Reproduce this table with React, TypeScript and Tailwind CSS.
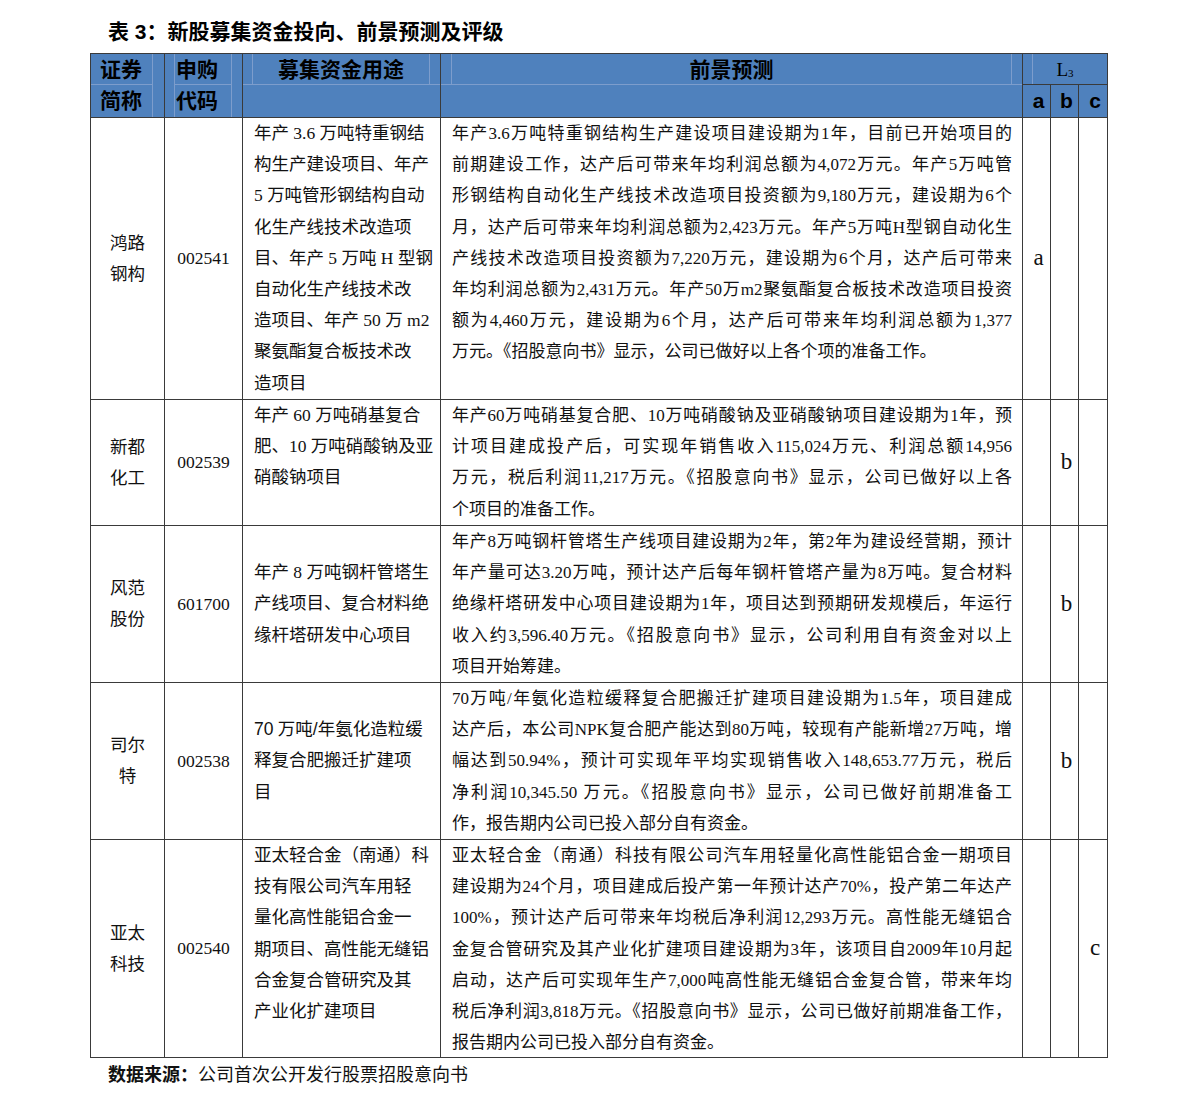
import React from 'react';

type Row = {
  name: [string, string];
  code: string;
  use: React.ReactNode[];
  useCenter: boolean;
  forecast: string[];
  rating: 'a' | 'b' | 'c';
};

const sans = "font-['Liberation_Sans','Noto_Sans_CJK_SC',sans-serif]";

const rows: Row[] = [
  {
    name: ['鸿路', '钢构'],
    code: '002541',
    use: [
      '年产 3.6 万吨特重钢结',
      '构生产建设项目、年产',
      '5 万吨管形钢结构自动',
      '化生产线技术改造项',
      '目、年产 5 万吨 H 型钢',
      '自动化生产线技术改',
      '造项目、年产 50 万 m2',
      '聚氨酯复合板技术改',
      '造项目',
    ],
    useCenter: false,
    forecast: [
      '年产3.6万吨特重钢结构生产建设项目建设期为1年，目前已开始项目的',
      '前期建设工作，达产后可带来年均利润总额为4,072万元。年产5万吨管',
      '形钢结构自动化生产线技术改造项目投资额为9,180万元，建设期为6个',
      '月，达产后可带来年均利润总额为2,423万元。年产5万吨H型钢自动化生',
      '产线技术改造项目投资额为7,220万元，建设期为6个月，达产后可带来',
      '年均利润总额为2,431万元。年产50万m2聚氨酯复合板技术改造项目投资',
      '额为4,460万元，建设期为6个月，达产后可带来年均利润总额为1,377',
      '万元。《招股意向书》显示，公司已做好以上各个项的准备工作。',
    ],
    rating: 'a',
  },
  {
    name: ['新都', '化工'],
    code: '002539',
    use: ['年产 60 万吨硝基复合', '肥、10 万吨硝酸钠及亚', '硝酸钠项目'],
    useCenter: false,
    forecast: [
      '年产60万吨硝基复合肥、10万吨硝酸钠及亚硝酸钠项目建设期为1年，预',
      '计项目建成投产后，可实现年销售收入115,024万元、利润总额14,956',
      '万元，税后利润11,217万元。《招股意向书》显示，公司已做好以上各',
      '个项目的准备工作。',
    ],
    rating: 'b',
  },
  {
    name: ['风范', '股份'],
    code: '601700',
    use: ['年产 8 万吨钢杆管塔生', '产线项目、复合材料绝', '缘杆塔研发中心项目'],
    useCenter: true,
    forecast: [
      '年产8万吨钢杆管塔生产线项目建设期为2年，第2年为建设经营期，预计',
      '年产量可达3.20万吨，预计达产后每年钢杆管塔产量为8万吨。复合材料',
      '绝缘杆塔研发中心项目建设期为1年，项目达到预期研发规模后，年运行',
      '收入约3,596.40万元。《招股意向书》显示，公司利用自有资金对以上',
      '项目开始筹建。',
    ],
    rating: 'b',
  },
  {
    name: ['司尔', '特'],
    code: '002538',
    use: [
      <>
        <span className={sans}>70</span> 万吨<span className={sans}>/</span>年氨化造粒缓
      </>,
      '释复合肥搬迁扩建项',
      '目',
    ],
    useCenter: true,
    forecast: [
      '70万吨/年氨化造粒缓释复合肥搬迁扩建项目建设期为1.5年，项目建成',
      '达产后，本公司NPK复合肥产能达到80万吨，较现有产能新增27万吨，增',
      '幅达到50.94%，预计可实现年平均实现销售收入148,653.77万元，税后',
      '净利润10,345.50 万元。《招股意向书》显示，公司已做好前期准备工',
      '作，报告期内公司已投入部分自有资金。',
    ],
    rating: 'b',
  },
  {
    name: ['亚太', '科技'],
    code: '002540',
    use: [
      '亚太轻合金（南通）科',
      '技有限公司汽车用轻',
      '量化高性能铝合金一',
      '期项目、高性能无缝铝',
      '合金复合管研究及其',
      '产业化扩建项目',
    ],
    useCenter: false,
    forecast: [
      '亚太轻合金（南通）科技有限公司汽车用轻量化高性能铝合金一期项目',
      '建设期为24个月，项目建成后投产第一年预计达产70%，投产第二年达产',
      '100%，预计达产后可带来年均税后净利润12,293万元。高性能无缝铝合',
      '金复合管研究及其产业化扩建项目建设期为3年，该项目自2009年10月起',
      '启动，达产后可实现年生产7,000吨高性能无缝铝合金复合管，带来年均',
      '税后净利润3,818万元。《招股意向书》显示，公司已做好前期准备工作，',
      '报告期内公司已投入部分自有资金。',
    ],
    rating: 'c',
  },
];

const cell = 'border-r border-b border-[#3a3a3a]';
const faint = 'border-[#7d9dcc]';

export default function App() {
  return (
    <div className="w-[1191px] h-[1104px] bg-white text-[#111] font-['Liberation_Serif','Noto_Sans_CJK_SC',serif]">
      <div className="pl-[90px]">
        <div
          className={`pt-[20px] pb-[9px] pl-[18px] leading-[24px] text-[21px] font-bold text-black whitespace-nowrap ${sans}`}
        >
          表 3：新股募集资金投向、前景预测及评级
        </div>

        <div className="grid w-[1018px] grid-cols-[74px_78px_198px_582px_28px_28px_29px] grid-rows-[31px_33px_282px_126px_157px_157px_218px] border-l border-t border-[#3a3a3a]">
          {/* Header */}
          <div className={`${cell} row-span-2 bg-[#4f81bd] flex ${sans} font-bold text-[21px] text-black`}>
            <div className={`flex-1 border-r ${faint} flex flex-col`}>
              <div className={`h-[31px] border-b ${faint} pl-[9px] leading-[31px]`}>证券</div>
              <div className="h-[32px] pl-[9px] leading-[32px]">简称</div>
            </div>
            <div className="w-[11px]" />
          </div>
          <div className={`${cell} row-span-2 bg-[#4f81bd] flex ${sans} font-bold text-[21px] text-black`}>
            <div className={`w-[10px] border-r ${faint}`} />
            <div className={`flex-1 border-r ${faint} flex flex-col`}>
              <div className={`h-[31px] border-b ${faint} pl-[1px] leading-[31px]`}>申购</div>
              <div className="h-[32px] pl-[1px] leading-[32px]">代码</div>
            </div>
            <div className="w-[10px]" />
          </div>
          <div className={`${cell} row-span-2 bg-[#4f81bd] flex flex-col ${sans} font-bold text-[21px] text-black`}>
            <div className={`h-[31px] border-b ${faint} flex`}>
              <div className={`w-[10px] border-r ${faint}`} />
              <div className={`flex-1 border-r ${faint} text-center leading-[31px]`}>募集资金用途</div>
              <div className="w-[10px]" />
            </div>
            <div className="flex-1" />
          </div>
          <div className={`${cell} row-span-2 bg-[#4f81bd] flex flex-col ${sans} font-bold text-[21px] text-black`}>
            <div className={`h-[31px] border-b ${faint} flex`}>
              <div className={`w-[11px] border-r ${faint}`} />
              <div className={`flex-1 border-r ${faint} text-center leading-[31px]`}>前景预测</div>
              <div className="w-[10px]" />
            </div>
            <div className="flex-1" />
          </div>
          <div className={`${cell} col-span-3 bg-[#4f81bd] flex`}>
            <div className={`w-[10px] border-r ${faint}`} />
            <div className="flex-1 flex items-center justify-center text-[19px] leading-none text-black pr-[10px]">
              L<span className="text-[11px] relative top-[4px]">3</span>
            </div>
          </div>
          {(['a', 'b', 'c'] as const).map((l) => (
            <div
              key={l}
              className={`${cell} bg-[#4f81bd] flex items-center justify-center pl-[4px] ${sans} font-bold text-[21px] text-black`}
            >
              {l}
            </div>
          ))}

          {/* Body */}
          {rows.map((r, i) => (
            <React.Fragment key={i}>
              <div className={`${cell} flex flex-col items-center justify-center text-[17.5px] leading-[31px]`}>
                <div>{r.name[0]}</div>
                <div>{r.name[1]}</div>
              </div>
              <div className={`${cell} flex items-center justify-center text-[17.5px]`}>{r.code}</div>
              <div
                className={`${cell} flex flex-col pl-[11px] text-[17.5px] leading-[31.2px] ${
                  r.useCenter ? 'justify-center' : 'justify-start'
                }`}
              >
                {r.use.map((u, j) => (
                  <div key={j} className="whitespace-nowrap">
                    {u}
                  </div>
                ))}
              </div>
              <div className={`${cell} flex flex-col pl-[11px] pr-[10px] text-[17px] leading-[31.2px]`}>
                {r.forecast.map((f, j) => (
                  <div
                    key={j}
                    className={`whitespace-nowrap ${
                      j < r.forecast.length - 1 ? 'text-justify [text-align-last:justify]' : ''
                    }`}
                  >
                    {f}
                  </div>
                ))}
              </div>
              {(['a', 'b', 'c'] as const).map((l) => (
                <div key={l} className={`${cell} flex items-center justify-center text-[23px] pl-[4px]`}>
                  {r.rating === l ? l : ''}
                </div>
              ))}
            </React.Fragment>
          ))}
        </div>

        <div className="mt-[5px] pl-[18px] leading-[24px] text-[18px] whitespace-nowrap">
          <span className={`font-bold ${sans}`}>数据来源：</span>
          <span>公司首次公开发行股票招股意向书</span>
        </div>
      </div>
    </div>
  );
}
